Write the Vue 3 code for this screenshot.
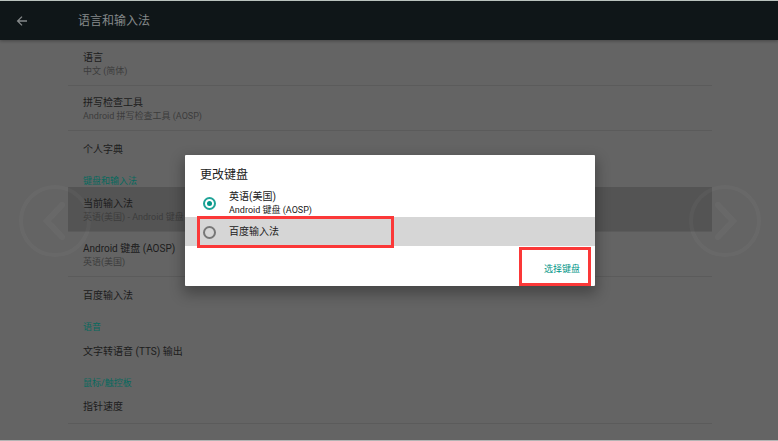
<script setup>
import { ref } from 'vue';

const groups = [
	{
		title: '',
		items: [
			{ name: '语言', summary: '中文 (简体)', divider: true },
			{
				name: '拼写检查工具',
				summary: 'Android 拼写检查工具 (AOSP)',
				divider: true,
			},
			{ name: '个人字典' },
		],
	},
	{
		title: '键盘和输入法',
		items: [
			{
				name: '当前输入法',
				summary: '英语(美国) - Android 键盘 (AOSP)',
				active: true,
				divider: true,
			},
			{ name: 'Android 键盘 (AOSP)', summary: '英语(美国)', divider: true },
			{ name: '百度输入法' },
		],
	},
	{
		title: '语音',
		items: [{ name: '文字转语音 (TTS) 输出' }],
	},
	{
		title: '鼠标/触控板',
		items: [{ name: '指针速度', divider: true }],
	},
];

const keyboards = [
	{ id: 'aosp', name: '英语(美国)', summary: 'Android 键盘 (AOSP)' },
	{ id: 'baidu', name: '百度输入法', pressed: true },
];

const selected = ref('aosp');
</script>

<template>
	<div class="screen">
		<header class="toolbar">
			<button class="back" type="button" aria-label="返回">
				<svg viewBox="0 0 12 12" width="12" height="12">
					<path d="M11 6H1.8M6 1.6L1.6 6L6 10.4" />
				</svg>
			</button>
			<h1>语言和输入法</h1>
		</header>

		<main class="settings">
			<section v-for="group in groups" :key="group.title">
				<h2 v-if="group.title">{{ group.title }}</h2>
				<ul>
					<li
						v-for="item in group.items"
						:key="item.name"
						:class="{
							double: item.summary,
							divider: item.divider,
							active: item.active,
						}"
					>
						<span class="name">{{ item.name }}</span>
						<span v-if="item.summary" class="summary">{{
							item.summary
						}}</span>
					</li>
				</ul>
			</section>
		</main>

		<button class="nav prev" type="button" aria-label="上一张">
			<svg viewBox="0 0 72 72" width="72" height="72">
				<circle cx="36" cy="36" r="34" />
				<path d="M43 20L28 36L43 52" />
			</svg>
		</button>
		<button class="nav next" type="button" aria-label="下一张">
			<svg viewBox="0 0 72 72" width="72" height="72">
				<circle cx="36" cy="36" r="34" />
				<path d="M29 20L44 36L29 52" />
			</svg>
		</button>

		<div class="overlay">
			<div class="dialog" role="dialog" aria-labelledby="dialog-title">
				<h3 id="dialog-title">更改键盘</h3>
				<label
					v-for="kb in keyboards"
					:key="kb.id"
					class="option"
					:class="{ pressed: kb.pressed }"
				>
					<input v-model="selected" type="radio" name="kb" :value="kb.id" />
					<span class="text">
						<span class="name">{{ kb.name }}</span>
						<span v-if="kb.summary" class="summary">{{ kb.summary }}</span>
					</span>
					<span v-if="kb.pressed" class="mark"></span>
				</label>
				<div class="actions">
					<button type="button">选择键盘</button>
					<span class="mark"></span>
				</div>
			</div>
		</div>
	</div>
</template>

<style>
body {
	margin: 0;
	background: #646464;
}
</style>

<style scoped>
.screen {
	position: relative;
	box-sizing: border-box;
	min-height: 100vh;
	border-top: 1px solid #b9c2bd;
	border-bottom: 1px solid #b4b4b4;
	background: #646464;
	font-family: Roboto, 'Noto Sans CJK SC', sans-serif;
	color: #1c1c1c;
	overflow: hidden;
}

h1,
h2,
h3,
ul {
	margin: 0;
	padding: 0;
	font-weight: 400;
	list-style: none;
}

button {
	padding: 0;
	border: 0;
	background: none;
	font-family: inherit;
	cursor: pointer;
}

.toolbar {
	display: flex;
	align-items: center;
	height: 39px;
	background: #0f1618;
	box-shadow: 0 1px 3px rgba(0, 0, 0, 0.3);
}

.toolbar h1 {
	margin-left: 50px;
	font-size: 12px;
	line-height: 16px;
	color: #85898a;
}

.back {
	display: flex;
	margin-left: 16px;
}

.back path {
	fill: none;
	stroke: #85898a;
	stroke-width: 1.3;
}

.settings {
	margin: 0 66px 0 68px;
	padding-top: 1px;
}

.settings h2 {
	padding: 9px 15px 0;
	font-size: 9px;
	line-height: 12px;
	color: #08695e;
}

.settings li {
	display: flex;
	flex-direction: column;
	justify-content: center;
	box-sizing: border-box;
	min-height: 35px;
	padding: 2px 15px 0;
}

.settings li.double {
	min-height: 45px;
}

.divider {
	border-bottom: 1px solid #5b5b5b;
}

.active {
	background: #545454;
}

.name {
	font-size: 10px;
	line-height: 14px;
}

.summary {
	font-size: 9px;
	line-height: 12px;
}

.settings .summary {
	color: #3c3c3c;
}

.nav {
	position: absolute;
	top: 50%;
	display: flex;
	transform: translateY(-50%);
}

.nav.prev {
	left: 19px;
}

.nav.next {
	right: 17px;
}

.nav svg {
	fill: none;
	stroke: rgba(255, 255, 255, 0.03);
	stroke-width: 4;
}

.nav path {
	stroke-width: 6;
	stroke-linecap: round;
}

.overlay {
	position: absolute;
	inset: 0;
	display: flex;
	align-items: center;
	justify-content: center;
	padding-left: 2px;
}

.dialog {
	width: 410px;
	max-width: 90%;
	border-radius: 1px;
	background: #fff;
	box-shadow: 0 6px 14px 2px rgba(0, 0, 0, 0.3);
	color: #212121;
}

.dialog h3 {
	padding: 12px 15px 4px;
	font-size: 12px;
	line-height: 17px;
}

.option {
	position: relative;
	display: flex;
	align-items: center;
	box-sizing: border-box;
	gap: 13px;
	min-height: 29px;
	padding: 1px 18px 0;
}

.option.pressed {
	background: #d6d6d6;
}

.option input {
	display: grid;
	place-items: center;
	box-sizing: border-box;
	width: 13px;
	height: 13px;
	margin: 0;
	border: 2px solid #777;
	border-radius: 50%;
	appearance: none;
}

.option input:checked {
	border-color: #1fa397;
}

.option input:checked::before {
	content: '';
	width: 5px;
	height: 5px;
	border-radius: 50%;
	background: #009688;
}

.option .text {
	display: flex;
	flex-direction: column;
}

.actions {
	position: relative;
	display: flex;
	align-items: center;
	justify-content: flex-end;
	box-sizing: border-box;
	height: 40px;
	padding: 6px 15px 0;
}

.actions button {
	font-size: 9px;
	line-height: 12px;
	color: #009688;
}

.mark {
	position: absolute;
	box-sizing: border-box;
	border: 3px solid #fb3838;
	pointer-events: none;
}

.option .mark {
	top: -1px;
	bottom: -2px;
	left: 12px;
	width: 197px;
}

.actions .mark {
	top: 1px;
	right: 4px;
	bottom: 0;
	width: 72px;
}
</style>
